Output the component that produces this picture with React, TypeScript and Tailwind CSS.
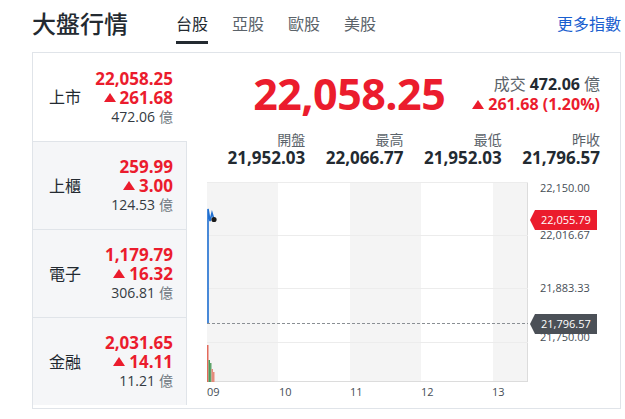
import React from "react";

const RED = "text-[#eb1c2d]";

function Tri() {
  return (
    <span className="inline-block w-0 h-0 border-l-[6px] border-r-[6px] border-b-[9px] border-l-transparent border-r-transparent border-b-[#eb1c2d] mr-[4px]" />
  );
}

function Row({
  label,
  price,
  change,
  vol,
  active,
}: {
  label: string;
  price: string;
  change: string;
  vol: string;
  active?: boolean;
}) {
  return (
    <div
      className={
        active
          ? "h-[88px] flex items-center pl-[16px] pr-[14px] bg-white"
          : "h-[88px] flex items-center pl-[16px] pr-[13px] bg-[#f5f6f8] border-t border-r border-[#e0e4e9]"
      }
    >
      <span className="text-[16px] text-[#232a31]">{label}</span>
      <div className="ml-auto flex flex-col items-end">
        <span className={`block h-[19px] text-[17px] leading-[19px] font-bold ${RED}`}>{price}</span>
        <span className={`h-[19px] text-[17px] leading-[19px] font-bold ${RED} flex items-center`}>
          <Tri />
          <span className="inline-block h-[19px] leading-[19px]">{change}</span>
        </span>
        <span className="h-[19px] flex items-center gap-[4px] text-[14px] leading-[19px] text-[#333a41]">
          <span className="inline-block h-[19px] leading-[19px]">{vol}</span>
          <span className="inline-block h-[19px] leading-[19px] text-[#6e7780]">億</span>
        </span>
      </div>
    </div>
  );
}

function Stat({ label, value }: { label: string; value: string }) {
  return (
    <div className="flex flex-col items-end">
      <span className="block h-[17px] text-[14px] leading-[17px] text-[#5b636a]">{label}</span>
      <span className="block h-[17px] mt-[1px] text-[17px] leading-[17px] font-bold text-[#232a31]">{value}</span>
    </div>
  );
}

function Chart() {
  return (
    <div className="flex flex-col">
      <div className="relative flex w-[413px] h-[200px]">
        <div className="relative w-[321px] h-[200px] flex border-r border-b border-[#dcdcdc]">
          <div className="w-[71px] bg-[#f4f4f4]" />
          <div className="w-[72px] bg-white" />
          <div className="w-[71px] bg-[#f4f4f4]" />
          <div className="w-[72px] bg-white" />
          <div className="flex-1 bg-[#f4f4f4]" />
          <svg
            className="absolute left-0 top-0"
            width="321"
            height="200"
            viewBox="0 0 321 200"
          >
            <line x1="0" y1="0.5" x2="321" y2="0.5" stroke="#ececec" />
            <line x1="0" y1="53.5" x2="321" y2="53.5" stroke="#ececec" />
            <line x1="0" y1="106.5" x2="321" y2="106.5" stroke="#ececec" />
            <line x1="0" y1="160.5" x2="321" y2="160.5" stroke="#ececec" />
            <line
              x1="0"
              y1="141.5"
              x2="321"
              y2="141.5"
              stroke="#8a8f94"
              strokeDasharray="3 2"
            />
            <rect x="0" y="163" width="1.5" height="37" fill="#e36a5c" />
            <rect x="1.5" y="178" width="1.5" height="22" fill="#4a9a5a" />
            <rect x="3" y="181" width="1.5" height="19" fill="#5fa36a" />
            <rect x="4.5" y="187" width="1.5" height="13" fill="#e58a7c" />
            <rect x="6" y="190" width="1.5" height="10" fill="#e58a7c" />
            <path
              d="M1 141 L1 27 L3 39 L5 31 L7 37.5"
              fill="none"
              stroke="#1f6fd1"
              strokeWidth="1.6"
            />
            <circle cx="7" cy="37.5" r="2.6" fill="#1b1b1b" />
          </svg>
        </div>
        <div className="relative flex-1">
          <span className="absolute left-[12px] top-[0px] text-[11px] leading-[11px] text-[#464e56]">
            22,150.00
          </span>
          <span className="absolute left-[12px] top-[47px] text-[11px] leading-[11px] text-[#464e56]">
            22,016.67
          </span>
          <span className="absolute left-[12px] top-[100px] text-[11px] leading-[11px] text-[#464e56]">
            21,883.33
          </span>
          <span className="absolute left-[12px] top-[149px] text-[11px] leading-[11px] text-[#464e56]">
            21,750.00
          </span>
          <div className="absolute left-[2px] top-[28px] flex items-center">
            <span className="w-0 h-0 border-t-[10px] border-b-[10px] border-r-[5px] border-t-transparent border-b-transparent border-r-[#eb1c2d]" />
            <span className="h-[20px] pl-[6px] pr-[6px] bg-[#eb1c2d] text-white text-[11px] leading-[20px]">
              22,055.79
            </span>
          </div>
          <div className="absolute left-[2px] top-[132px] flex items-center">
            <span className="w-0 h-0 border-t-[10px] border-b-[10px] border-r-[5px] border-t-transparent border-b-transparent border-r-[#4b5057]" />
            <span className="h-[20px] pl-[6px] pr-[6px] bg-[#4b5057] text-white text-[11px] leading-[20px]">
              21,796.57
            </span>
          </div>
        </div>
      </div>
      <div className="relative h-[24px] pt-[2px] text-[11px] leading-[16px] text-[#464e56]">
        <span className="absolute left-[0px]">09</span>
        <span className="absolute left-[72px]">10</span>
        <span className="absolute left-[143px]">11</span>
        <span className="absolute left-[214px]">12</span>
        <span className="absolute left-[285px]">13</span>
      </div>
    </div>
  );
}

export default function App() {
  return (
    <div className="w-[625px] h-[419px] bg-white pl-[32px] font-['Open_Sans','Noto_Sans_CJK_TC',sans-serif] text-[#232a31]">
      <div className="h-[52px] w-[589px] flex items-start pt-[8px]">
        <h1 className="text-[24px] leading-[32px] font-medium text-[#232a31]">大盤行情</h1>
        <div className="ml-[48px] flex gap-[24px]">
          <div className="flex flex-col pt-[4px]">
            <span className="text-[16px] leading-[24px] text-[#232a31]">台股</span>
            <span className="mt-[5px] h-[3px] bg-[#232a31]" />
          </div>
          <div className="flex flex-col pt-[4px]">
            <span className="text-[16px] leading-[24px] text-[#5b636a]">亞股</span>
          </div>
          <div className="flex flex-col pt-[4px]">
            <span className="text-[16px] leading-[24px] text-[#5b636a]">歐股</span>
          </div>
          <div className="flex flex-col pt-[4px]">
            <span className="text-[16px] leading-[24px] text-[#5b636a]">美股</span>
          </div>
        </div>
        <span className="ml-auto pt-[4px] text-[16px] leading-[24px] text-[#1a5fcf]">更多指數</span>
      </div>

      <div className="w-[589px] h-[357px] border border-[#e0e4e9] flex">
        <div className="w-[154px] flex flex-col">
          <Row label="上市" price="22,058.25" change="261.68" vol="472.06" active />
          <Row label="上櫃" price="259.99" change="3.00" vol="124.53" />
          <Row label="電子" price="1,179.79" change="16.32" vol="306.81" />
          <Row label="金融" price="2,031.65" change="14.11" vol="11.21" />
        </div>

        <div className="flex-1 flex flex-col pl-[20px] pt-[19px]">
          <div className="pr-[20px] h-[44px] flex items-center justify-end gap-[27px]">
            <span className={`text-[43px] leading-[44px] tracking-[-0.5px] font-bold ${RED}`}>22,058.25</span>
            <div className="flex flex-col items-end">
              <span className="h-[20px] flex items-center gap-[4px] text-[16px] leading-[20px]">
                <span className="inline-block h-[20px] leading-[20px] text-[#5b636a]">成交</span>
                <span className="inline-block h-[20px] leading-[20px] font-bold text-[#232a31]">472.06</span>
                <span className="inline-block h-[20px] leading-[20px] text-[#5b636a]">億</span>
              </span>
              <span className={`h-[20px] text-[16px] leading-[20px] font-bold ${RED} flex items-center`}>
                <Tri />
                <span className="inline-block h-[20px] leading-[20px]">261.68 (1.20%)</span>
              </span>
            </div>
          </div>
          <div className="pr-[20px] mt-[15px] grid grid-cols-4">
            <Stat label="開盤" value="21,952.03" />
            <Stat label="最高" value="22,066.77" />
            <Stat label="最低" value="21,952.03" />
            <Stat label="昨收" value="21,796.57" />
          </div>
          <div className="mt-[16px]">
            <Chart />
          </div>
        </div>
      </div>
    </div>
  );
}
